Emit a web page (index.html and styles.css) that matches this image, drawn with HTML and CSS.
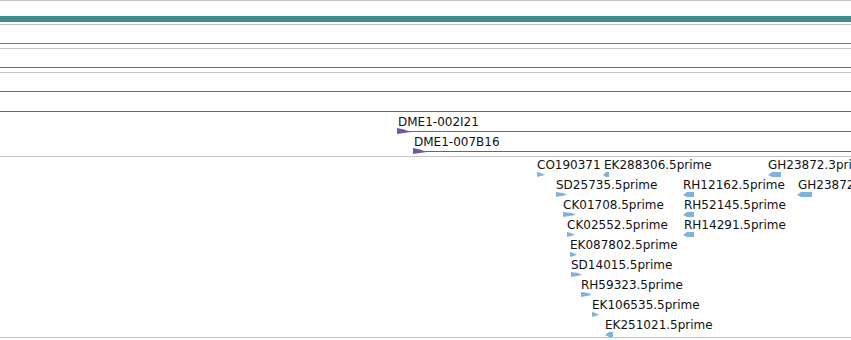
FILE: index.html
```html
<!DOCTYPE html>
<html lang="en">
<head>
    <meta charset="UTF-8">
    <title>Track view</title>
    <link rel="stylesheet" href="styles.css">
</head>
<body>
    <div class="view">
        <div class="track track-ref">
            <div class="ref-bar"></div>
        </div>

        <div class="track track-line">
            <div class="span-line teal"></div>
        </div>

        <div class="track track-line">
            <div class="span-line blue"></div>
        </div>

        <div class="track track-clones">
            <div class="clone-line" style="top: 18px; left: 0;"></div>
            <div class="clone-line" style="top: 38px; left: 0;"></div>

            <div class="label" style="top: 42px; left: 398px;">DME1-002I21</div>
            <div class="clone-line" style="top: 58px; left: 404px;"></div>
            <svg class="clone-head" style="top: 55px; left: 397px;" width="14" height="6" viewBox="0 0 14 6"><polygon points="0,0 7,1.5 14,4 0,6"/></svg>

            <div class="label" style="top: 62px; left: 414px;">DME1-007B16</div>
            <div class="clone-line" style="top: 78px; left: 420px;"></div>
            <svg class="clone-head" style="top: 75px; left: 413px;" width="14" height="6" viewBox="0 0 14 6"><polygon points="0,0 7,1.5 14,4 0,6"/></svg>
        </div>

        <div class="track track-est" id="estTrack"></div>
    </div>

    <script src="app.js"></script>
</body>
</html>
```

FILE: styles.css
```css
* {
    margin: 0;
    padding: 0;
    box-sizing: border-box;
}

body {
    font-family: 'DejaVu Sans', Verdana, sans-serif;
    font-size: 12px;
    background: white;
    color: #111;
    width: 851px;
    height: 340px;
    overflow: hidden;
}

.view {
    width: 851px;
    overflow: hidden;
}

.track {
    position: relative;
    border-top: 1px solid #c2c2c2;
    overflow: hidden;
}

.track-ref {
    height: 24px;
    padding-top: 15px;
}

.ref-bar {
    height: 6px;
    background: #408e8f;
}

.track-line {
    height: 24px;
    padding-top: 18px;
}

.span-line {
    height: 1px;
}

.span-line.teal {
    background: #1f94ae;
}

.span-line.blue {
    background: #3b6fbd;
}

.track-clones {
    height: 84px;
}

.clone-line {
    position: absolute;
    right: 0;
    height: 1px;
    background: #6c5aa5;
}

.clone-head {
    position: absolute;
    display: block;
    fill: #6c5aa5;
}

.track-est {
    height: 182px;
    border-bottom: 1px solid #c2c2c2;
}

.label {
    position: absolute;
    line-height: 14px;
    white-space: nowrap;
    color: #111;
}

.est-head {
    position: absolute;
    display: block;
    fill: #7fb3dc;
}
```

FILE: app.js
```js
// EST features: [label, label x, arrow x, arrow width, strand, row]
const ests = [
    ['CO190371', 537, 537, 8, 1, 0],
    ['EK288306.5prime', 604, 603, 6, -1, 0],
    ['GH23872.3prime', 768, 768, 13, -1, 0],
    ['SD25735.5prime', 556, 556, 11, 1, 1],
    ['RH12162.5prime', 683, 683, 11, -1, 1],
    ['GH23872.5prime', 798, 797, 15, -1, 1],
    ['CK01708.5prime', 563, 563, 13, 1, 2],
    ['RH52145.5prime', 684, 683, 11, -1, 2],
    ['CK02552.5prime', 567, 567, 8, 1, 3],
    ['RH14291.5prime', 684, 683, 11, -1, 3],
    ['EK087802.5prime', 570, 570, 7, 1, 4],
    ['SD14015.5prime', 571, 571, 11, 1, 5],
    ['RH59323.5prime', 581, 581, 11, 1, 6],
    ['EK106535.5prime', 592, 592, 7, 1, 7],
    ['EK251021.5prime', 605, 605, 8, -1, 8]
];

const track = document.getElementById('estTrack');
const svgNS = 'http://www.w3.org/2000/svg';

ests.forEach(([name, lx, ax, w, strand, row]) => {
    const label = document.createElement('div');
    label.className = 'label';
    label.textContent = name;
    label.style.top = (1 + row * 20) + 'px';
    label.style.left = lx + 'px';
    track.appendChild(label);

    const svg = document.createElementNS(svgNS, 'svg');
    svg.setAttribute('class', 'est-head');
    svg.setAttribute('width', w);
    svg.setAttribute('height', 5);
    svg.style.top = (15 + row * 20) + 'px';
    svg.style.left = ax + 'px';

    const poly = document.createElementNS(svgNS, 'polygon');
    const tip = Math.min(4, w / 2);
    let pts;
    if (strand > 0) {
        pts = `0,0 ${w - tip},1 ${w},3 0,5`;
    } else {
        pts = `0,3 ${tip},0 ${w},0 ${w},5 ${tip},5`;
    }
    poly.setAttribute('points', pts);
    svg.appendChild(poly);
    track.appendChild(svg);
});
```
